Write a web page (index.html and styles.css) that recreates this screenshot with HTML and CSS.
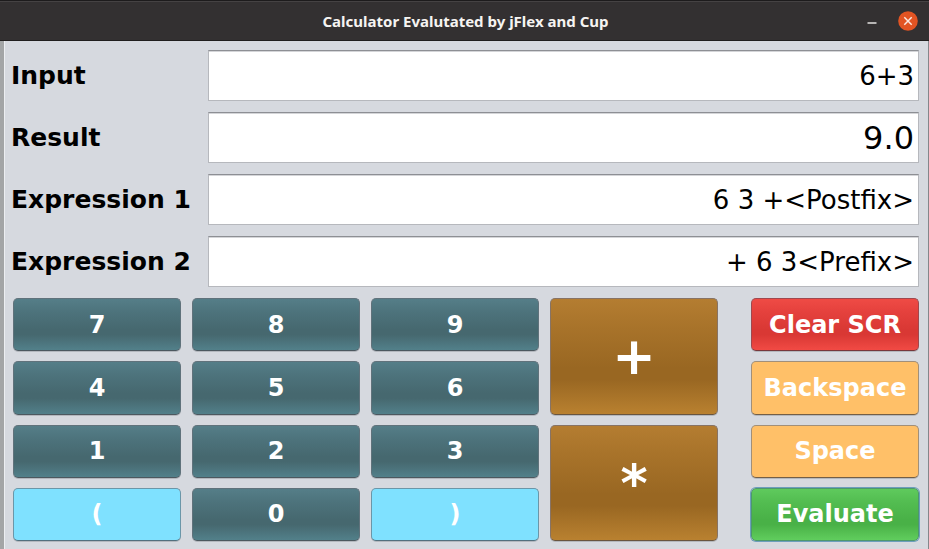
FILE: index.html
```html
<!DOCTYPE html>
<html lang="en">
<head>
<meta charset="utf-8">
<title>Calculator Evalutated by jFlex and Cup</title>
<link rel="stylesheet" href="styles.css">
</head>
<body>
<div class="window">
  <header class="titlebar">
    <h1 class="title">Calculator Evalutated by jFlex and Cup</h1>
    <div class="window-controls">
      <button class="control" type="button" aria-label="Minimize">
        <svg width="20" height="20" viewBox="0 0 20 20"><path d="M5.500 12h9" stroke="#e4e2e0" stroke-width="1.500" fill="none"/></svg>
      </button>
      <button class="control" type="button" aria-label="Close">
        <svg width="20" height="20" viewBox="0 0 20 20"><circle cx="10" cy="10" r="9.800" fill="#e25423"/><path d="M6.300 6.300l7.400 7.400M13.700 6.300l-7.400 7.400" stroke="#fbe9e2" stroke-width="1.500" fill="none"/></svg>
      </button>
    </div>
  </header>
  <form class="content">
    <div class="fields">
      <label for="input">Input</label>
      <input class="field" id="input" type="text" value="6+3">
      <label for="result">Result</label>
      <input class="field field-result" id="result" type="text" value="9.0">
      <label for="postfix">Expression 1</label>
      <input class="field" id="postfix" type="text" value="6 3 +&lt;Postfix&gt;">
      <label for="prefix">Expression 2</label>
      <input class="field" id="prefix" type="text" value="+ 6 3&lt;Prefix&gt;">
    </div>
    <div class="keys">
      <button class="key" type="button">7</button>
      <button class="key" type="button">8</button>
      <button class="key" type="button">9</button>
      <button class="key operator" type="button">+</button>
      <button class="key action clear" type="button">Clear SCR</button>
      <button class="key" type="button">4</button>
      <button class="key" type="button">5</button>
      <button class="key" type="button">6</button>
      <button class="key action edit" type="button">Backspace</button>
      <button class="key" type="button">1</button>
      <button class="key" type="button">2</button>
      <button class="key" type="button">3</button>
      <button class="key operator" type="button">*</button>
      <button class="key action edit" type="button">Space</button>
      <button class="key paren" type="button">(</button>
      <button class="key" type="button">0</button>
      <button class="key paren" type="button">)</button>
      <button class="key action evaluate" type="button">Evaluate</button>
    </div>
  </form>
</div>
</body>
</html>
```
FILE: styles.css
```css
* {
  box-sizing: border-box;
}

body {
  margin: 0;
  background: #d6d9df;
  font-family: "DejaVu Sans", sans-serif;
}

.window {
  display: flex;
  flex-direction: column;
  min-height: 100vh;
}

.titlebar {
  display: grid;
  grid-template-columns: 1fr auto 1fr;
  align-items: center;
  height: 41px;
  padding: 0 11px 0 13px;
  border-top: 1px solid #1d1b1c;
  border-bottom: 1px solid #201e1e;
  background: #333031;
  box-shadow: inset 0 1px #454243;
}

.title {
  grid-column: 2;
  margin: 0;
  color: #f6f4f2;
  font: bold 15px/20px "Noto Sans", sans-serif;
}

.window-controls {
  display: flex;
  justify-content: flex-end;
  gap: 16px;
}

.control {
  width: 20px;
  height: 20px;
  padding: 0;
  border: 0;
  background: none;
}

.control svg {
  display: block;
}

.content {
  display: flex;
  flex: 1;
  flex-direction: column;
  gap: 11px;
  padding: 9px 9px 8px 7px;
  border-left: 4px solid #a3a5a6;
  border-right: 1px solid #85878b;
  box-shadow: inset 1px 0 #eceef1;
}

.fields {
  display: grid;
  grid-template-columns: auto 1fr;
  gap: 11px 17px;
  align-items: center;
}

label {
  color: #000;
  font-size: 25px;
  font-weight: bold;
  line-height: 32px;
}

.field {
  width: 100%;
  min-width: 0;
  height: 51px;
  padding: 0 4px;
  border: 1px solid #b6b8bd;
  border-top-color: #8d8f94;
  border-radius: 0;
  outline: 0;
  background: #fff;
  box-shadow: inset 0 1px #d4d5d8;
  color: #000;
  font: 26px "DejaVu Sans", sans-serif;
  text-align: right;
}

.field-result {
  font-size: 32px;
}

.keys {
  display: grid;
  flex: 1;
  grid-template-columns: repeat(4, 1fr) 11px 1fr;
  grid-template-rows: repeat(4, minmax(53px, 1fr));
  gap: 10px 11px;
  padding-left: 2px;
}

.key {
  min-width: 0;
  padding: 0;
  border: 1px solid #60727b;
  border-bottom-color: #4c585f;
  border-radius: 5px;
  background: linear-gradient(#557e88, #4d737c 25%, #46686f 60%, #46686f 70%, #52808a);
  box-shadow: 0 1px #b4b8be;
  color: #fff;
  font: bold 24px/32px "DejaVu Sans", sans-serif;
}

.operator {
  grid-row: span 2;
  border-color: #877365;
  border-bottom-color: #69553f;
  background: linear-gradient(#b47d31, #a8732a 25%, #996722 60%, #996722 70%, #b98130);
  font-size: 52px;
}

.action {
  grid-column: 6;
}

.paren {
  border-color: #6b96a8;
  border-bottom-color: #52707e;
  background: #7fe1ff;
}

.clear {
  border-color: #a0484e;
  border-bottom-color: #77373b;
  background: linear-gradient(#ef4b45, #e5413d 25%, #d93834 60%, #d93834 70%, #f14a44);
}

.edit {
  border-color: #a18f79;
  border-bottom-color: #745f46;
  background: #ffc068;
}

.evaluate {
  border-color: #4d976e;
  background: linear-gradient(#5fca5d, #53bd51 25%, #49b147 60%, #49b147 70%, #60cd5d);
  box-shadow: 0 0 0 1px #6d9ebc;
}
```
